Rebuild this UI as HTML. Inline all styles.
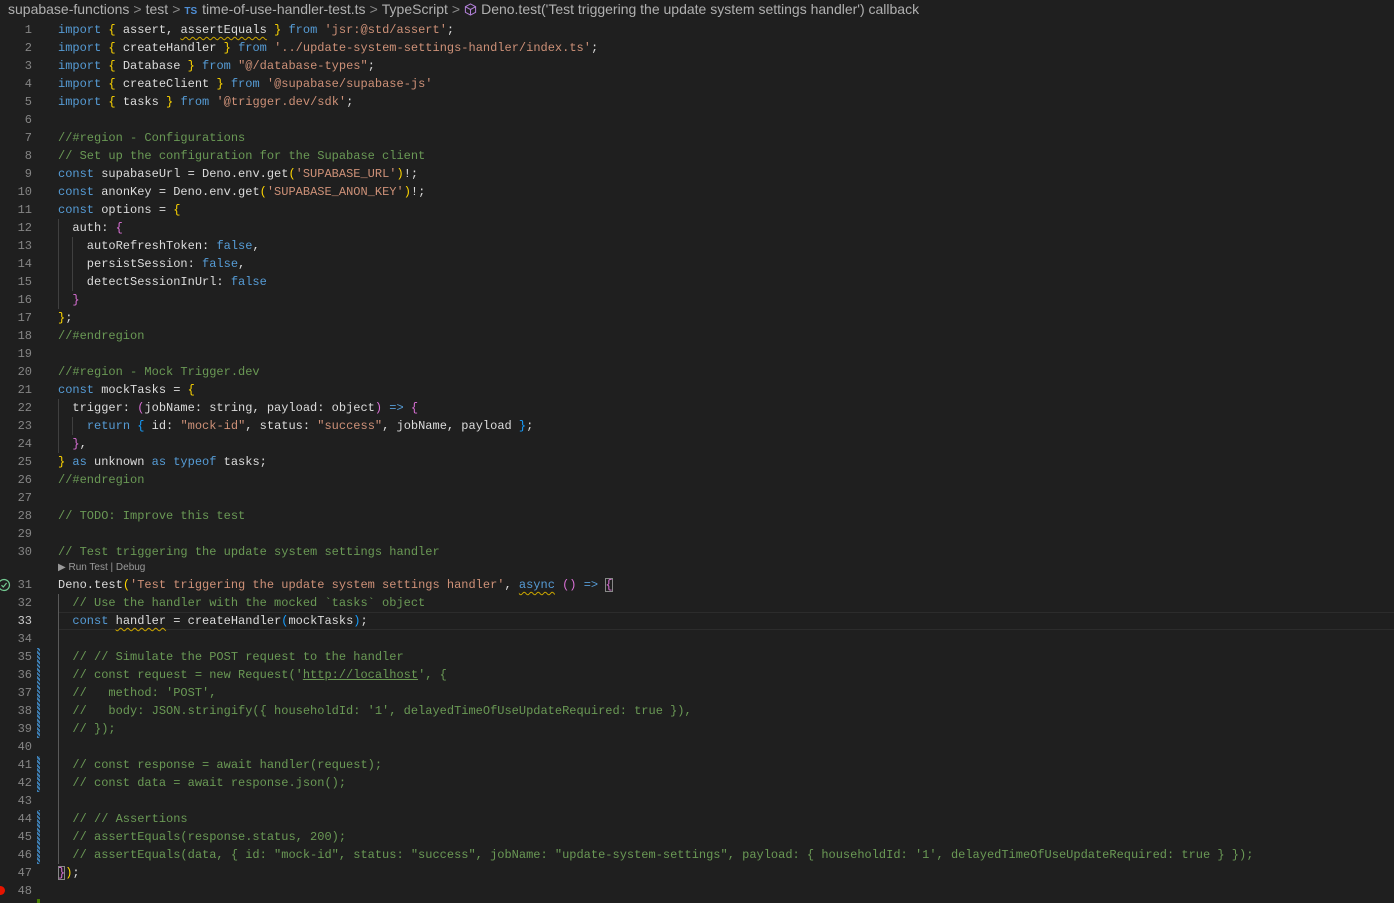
<!DOCTYPE html>
<html><head><meta charset="utf-8"><style>
html,body{margin:0;padding:0;background:#1f1f1f;width:1394px;height:903px;overflow:hidden;position:relative}
.bc{position:absolute;left:8px;top:1px;height:18px;line-height:18px;font:14px "Liberation Sans",sans-serif;color:#b0b0b0;white-space:nowrap}
.bc .sep{color:#8a8a8a;margin:0 4px}
.bc .ts{color:#4f8fd6;font-size:10px;font-weight:bold;margin-right:5px}
.ln{position:absolute;width:32px;text-align:right;font:12px/18px "Liberation Mono",monospace;color:#858585;margin-top:1px}
.ln.cur{color:#cccccc}
.cl{position:absolute;left:58px;font:12px/18px "Liberation Mono",monospace;color:#dcdcdc;white-space:pre;margin-top:1px}
.k{color:#569cd6}.s{color:#ce9178}.c{color:#6a9955}.y{color:#ffd700}.p{color:#da70d6}.b{color:#179fff}
.sq{text-decoration:underline wavy #cca700;text-underline-offset:3px;text-decoration-thickness:1px}
.u{text-decoration:underline}
.g{position:absolute;width:1px;background:#404040}
.chg{position:absolute;left:37px;width:3px;background:repeating-linear-gradient(45deg,#3d7fb5 0 2px,#1f1f1f 2px 3px)}
.lens{position:absolute;left:58px;top:562px;font:10px "Liberation Sans",sans-serif;color:#999}
</style></head><body>
<div class="bc">supabase-functions<span class="sep">&gt;</span>test<span class="sep">&gt;</span><span class="ts">TS</span>time-of-use-handler-test.ts<span class="sep">&gt;</span>TypeScript<span class="sep">&gt;</span><svg width="13" height="13" viewBox="0 0 14 14" style="vertical-align:-2px;margin-right:4px"><path d="M7 1L12.5 4V10L7 13L1.5 10V4Z M1.5 4L7 7L12.5 4 M7 7V13" fill="none" stroke="#b180d7" stroke-width="1.1"/></svg>Deno.test('Test triggering the update system settings handler') callback</div>

<div style="position:absolute;left:58px;right:0;top:612px;height:18px;border-top:1px solid #2c2c2c;border-bottom:1px solid #2c2c2c;box-sizing:border-box"></div>

<div class="g" style="left:58px;top:219px;height:90px"></div>
<div class="g" style="left:72px;top:237px;height:54px"></div>
<div class="g" style="left:58px;top:399px;height:54px"></div>
<div class="g" style="left:72px;top:417px;height:18px"></div>
<div class="g" style="left:58px;top:594px;height:270px;background:#5a5a5a"></div>

<div class="chg" style="top:648px;height:90px"></div>
<div class="chg" style="top:756px;height:36px"></div>
<div class="chg" style="top:810px;height:54px"></div>

<svg style="position:absolute;left:-3px;top:578px" width="14" height="14" viewBox="0 0 14 14"><circle cx="7" cy="7" r="5.5" fill="none" stroke="#73c991" stroke-width="1.2"/><path d="M4.5 7.2L6.3 9L9.6 5" fill="none" stroke="#73c991" stroke-width="1.2"/></svg>
<div style="position:absolute;left:-4px;top:886px;width:9px;height:9px;border-radius:50%;background:#e51400"></div>
<div style="position:absolute;left:37px;top:899px;width:3px;height:4px;background:#487e02"></div>

<div class="lens">&#9654; Run Test | Debug</div>

<div class="ln" style="top:20px">1</div><div class="cl" style="top:20px"><span class="k">import</span> <span class="y">{</span> assert, <span class="sq">assertEquals</span> <span class="y">}</span> <span class="k">from</span> <span class="s">'jsr:@std/assert'</span>;</div>
<div class="ln" style="top:38px">2</div><div class="cl" style="top:38px"><span class="k">import</span> <span class="y">{</span> createHandler <span class="y">}</span> <span class="k">from</span> <span class="s">'../update-system-settings-handler/index.ts'</span>;</div>
<div class="ln" style="top:56px">3</div><div class="cl" style="top:56px"><span class="k">import</span> <span class="y">{</span> Database <span class="y">}</span> <span class="k">from</span> <span class="s">"@/database-types"</span>;</div>
<div class="ln" style="top:74px">4</div><div class="cl" style="top:74px"><span class="k">import</span> <span class="y">{</span> createClient <span class="y">}</span> <span class="k">from</span> <span class="s">'@supabase/supabase-js'</span></div>
<div class="ln" style="top:92px">5</div><div class="cl" style="top:92px"><span class="k">import</span> <span class="y">{</span> tasks <span class="y">}</span> <span class="k">from</span> <span class="s">'@trigger.dev/sdk'</span>;</div>
<div class="ln" style="top:110px">6</div>
<div class="ln" style="top:128px">7</div><div class="cl c" style="top:128px">//#region - Configurations</div>
<div class="ln" style="top:146px">8</div><div class="cl c" style="top:146px">// Set up the configuration for the Supabase client</div>
<div class="ln" style="top:164px">9</div><div class="cl" style="top:164px"><span class="k">const</span> supabaseUrl = Deno.env.get<span class="y">(</span><span class="s">'SUPABASE_URL'</span><span class="y">)</span>!;</div>
<div class="ln" style="top:182px">10</div><div class="cl" style="top:182px"><span class="k">const</span> anonKey = Deno.env.get<span class="y">(</span><span class="s">'SUPABASE_ANON_KEY'</span><span class="y">)</span>!;</div>
<div class="ln" style="top:200px">11</div><div class="cl" style="top:200px"><span class="k">const</span> options = <span class="y">{</span></div>
<div class="ln" style="top:218px">12</div><div class="cl" style="top:218px">  auth: <span class="p">{</span></div>
<div class="ln" style="top:236px">13</div><div class="cl" style="top:236px">    autoRefreshToken: <span class="k">false</span>,</div>
<div class="ln" style="top:254px">14</div><div class="cl" style="top:254px">    persistSession: <span class="k">false</span>,</div>
<div class="ln" style="top:272px">15</div><div class="cl" style="top:272px">    detectSessionInUrl: <span class="k">false</span></div>
<div class="ln" style="top:290px">16</div><div class="cl" style="top:290px">  <span class="p">}</span></div>
<div class="ln" style="top:308px">17</div><div class="cl" style="top:308px"><span class="y">}</span>;</div>
<div class="ln" style="top:326px">18</div><div class="cl c" style="top:326px">//#endregion</div>
<div class="ln" style="top:344px">19</div>
<div class="ln" style="top:362px">20</div><div class="cl c" style="top:362px">//#region - Mock Trigger.dev</div>
<div class="ln" style="top:380px">21</div><div class="cl" style="top:380px"><span class="k">const</span> mockTasks = <span class="y">{</span></div>
<div class="ln" style="top:398px">22</div><div class="cl" style="top:398px">  trigger: <span class="p">(</span>jobName: string, payload: object<span class="p">)</span> <span class="k">=&gt;</span> <span class="p">{</span></div>
<div class="ln" style="top:416px">23</div><div class="cl" style="top:416px">    <span class="k">return</span> <span class="b">{</span> id: <span class="s">"mock-id"</span>, status: <span class="s">"success"</span>, jobName, payload <span class="b">}</span>;</div>
<div class="ln" style="top:434px">24</div><div class="cl" style="top:434px">  <span class="p">}</span>,</div>
<div class="ln" style="top:452px">25</div><div class="cl" style="top:452px"><span class="y">}</span> <span class="k">as</span> unknown <span class="k">as</span> <span class="k">typeof</span> tasks;</div>
<div class="ln" style="top:470px">26</div><div class="cl c" style="top:470px">//#endregion</div>
<div class="ln" style="top:488px">27</div>
<div class="ln" style="top:506px">28</div><div class="cl c" style="top:506px">// TODO: Improve this test</div>
<div class="ln" style="top:524px">29</div>
<div class="ln" style="top:542px">30</div><div class="cl c" style="top:542px">// Test triggering the update system settings handler</div>
<div class="ln" style="top:575px">31</div><div class="cl" style="top:575px">Deno.test<span class="y">(</span><span class="s">'Test triggering the update system settings handler'</span>, <span class="k sq">async</span> <span class="p">()</span> <span class="k">=&gt;</span> <span class="p" style="outline:1px solid #888;outline-offset:-1px">{</span></div>
<div class="ln" style="top:593px">32</div><div class="cl c" style="top:593px">  // Use the handler with the mocked `tasks` object</div>
<div class="ln cur" style="top:611px">33</div><div class="cl" style="top:611px">  <span class="k">const</span> <span class="sq">handler</span> = createHandler<span class="b">(</span>mockTasks<span class="b">)</span>;</div>
<div class="ln" style="top:629px">34</div>
<div class="ln" style="top:647px">35</div><div class="cl c" style="top:647px">  // // Simulate the POST request to the handler</div>
<div class="ln" style="top:665px">36</div><div class="cl c" style="top:665px">  // const request = new Request('<span class="u">http://localhost</span>', {</div>
<div class="ln" style="top:683px">37</div><div class="cl c" style="top:683px">  //   method: 'POST',</div>
<div class="ln" style="top:701px">38</div><div class="cl c" style="top:701px">  //   body: JSON.stringify({ householdId: '1', delayedTimeOfUseUpdateRequired: true }),</div>
<div class="ln" style="top:719px">39</div><div class="cl c" style="top:719px">  // });</div>
<div class="ln" style="top:737px">40</div>
<div class="ln" style="top:755px">41</div><div class="cl c" style="top:755px">  // const response = await handler(request);</div>
<div class="ln" style="top:773px">42</div><div class="cl c" style="top:773px">  // const data = await response.json();</div>
<div class="ln" style="top:791px">43</div>
<div class="ln" style="top:809px">44</div><div class="cl c" style="top:809px">  // // Assertions</div>
<div class="ln" style="top:827px">45</div><div class="cl c" style="top:827px">  // assertEquals(response.status, 200);</div>
<div class="ln" style="top:845px">46</div><div class="cl c" style="top:845px">  // assertEquals(data, { id: "mock-id", status: "success", jobName: "update-system-settings", payload: { householdId: '1', delayedTimeOfUseUpdateRequired: true } });</div>
<div class="ln" style="top:863px">47</div><div class="cl" style="top:863px"><span class="p" style="outline:1px solid #888;outline-offset:-1px">}</span><span class="y">)</span>;</div>
<div class="ln" style="top:881px">48</div>
</body></html>
